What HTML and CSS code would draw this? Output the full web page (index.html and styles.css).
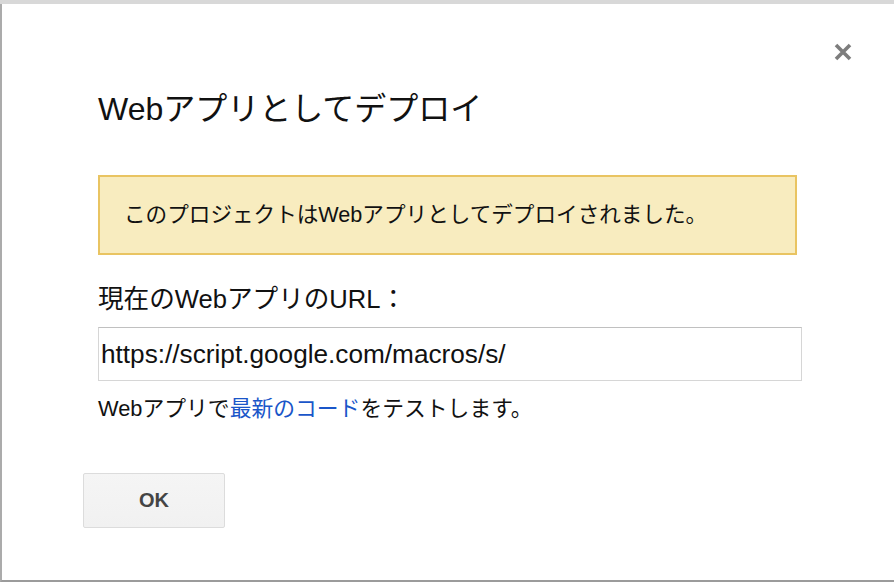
FILE: index.html
```html
<!DOCTYPE html>
<html lang="ja">
<head>
<meta charset="utf-8">
<title>Webアプリとしてデプロイ</title>
<link rel="stylesheet" href="styles.css">
</head>
<body>
<div class="page">
  <div class="dialog">
    <div class="close-row">
      <svg class="close" width="20" height="20" viewBox="0 0 20 20" aria-label="閉じる">
        <path d="M3 3 L17 17 M17 3 L3 17" stroke="#777" stroke-width="3.6" fill="none"/>
      </svg>
    </div>
    <h1 class="title">Webアプリとしてデプロイ</h1>
    <div class="notice">このプロジェクトはWebアプリとしてデプロイされました。</div>
    <div class="label">現在のWebアプリのURL：</div>
    <div class="url-field">https://script.google.com/macros/s/</div>
    <p class="help">Webアプリで<a class="link" href="#">最新のコード</a>をテストします。</p>
    <div class="actions">
      <button class="ok-btn" type="button">OK</button>
    </div>
  </div>
</div>
</body>
</html>
```

FILE: styles.css
```css
html, body {
  margin: 0;
  padding: 0;
  background: #ffffff;
}

body {
  font-family: "Liberation Sans", "Noto Sans CJK JP", sans-serif;
  color: #222;
}

.page {
  width: 894px;
  height: 582px;
  box-sizing: border-box;
  border-top: 4px solid #d8d8d8;
  overflow: hidden;
}

.dialog {
  height: 578px;
  box-sizing: border-box;
  border-left: 2px solid #ababab;
  border-bottom: 2px solid #9b9b9b;
  padding-left: 96px;
  background: #fff;
}

.close-row {
  display: flex;
  justify-content: flex-end;
  padding: 38px 41px 0 0;
  height: 20px;
}

.close {
  display: block;
  opacity: 0.95;
}

.title {
  margin: 27px 0 0 0;
  font-size: 32px;
  line-height: 40px;
  font-weight: normal;
  color: #111;
}

.notice {
  margin-top: 46px;
  width: 699px;
  height: 80px;
  box-sizing: border-box;
  background: #f8ecbf;
  border: 2px solid #e9c462;
  display: flex;
  align-items: center;
  padding-left: 24px;
  font-size: 21.6px;
  line-height: 28px;
  color: #111;
}

.label {
  margin-top: 28px;
  font-size: 25.6px;
  line-height: 32px;
  color: #111;
}

.url-field {
  margin-top: 12px;
  width: 704px;
  height: 54px;
  box-sizing: border-box;
  border: 1px solid #d6d6d6;
  border-top-color: #c0c0c0;
  padding-left: 2px;
  display: flex;
  align-items: center;
  font-size: 26.2px;
  color: #111;
  white-space: nowrap;
  overflow: hidden;
}

.help {
  margin: 14px 0 0 0;
  font-size: 21.8px;
  line-height: 28px;
  color: #111;
}

.link {
  color: #1a56c9;
  text-decoration: none;
}

.actions {
  margin-top: 50px;
  margin-left: -15px;
}

.ok-btn {
  width: 142px;
  height: 55px;
  box-sizing: border-box;
  border: 1px solid #dcdcdc;
  border-radius: 2px;
  background: linear-gradient(#f5f5f5, #f1f1f1);
  font-family: "Liberation Sans", sans-serif;
  font-weight: bold;
  font-size: 20px;
  color: #444;
  padding: 0;
}
```
